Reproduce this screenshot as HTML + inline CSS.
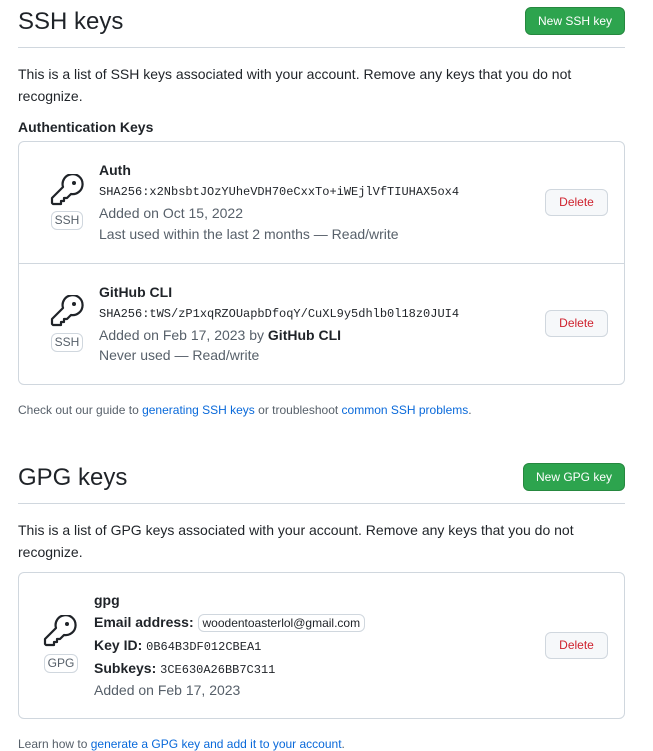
<!DOCTYPE html><html><head><style>
body{margin:0;width:653px;height:747px;overflow:hidden;background:#fff;font-family:"Liberation Sans",sans-serif;color:#1f2328;position:relative}
.a{position:absolute;white-space:nowrap}
h2{position:absolute;margin:0;font-weight:400;font-size:24px;left:18px}
.hr{position:absolute;left:18px;width:607px;height:1px;background:#d0d7de}
.btn{position:absolute;background:#2da44e;color:#fff;border:1px solid #26883f;border-radius:6px;font-size:12px;text-align:center;box-sizing:border-box;line-height:26px}
.p{font-size:14px;line-height:22px;left:18px}
.box{position:absolute;left:18px;width:607px;border:1px solid #d0d7de;border-radius:6px;box-sizing:border-box}
.t{font-size:14px;font-weight:bold}
.m{font-family:"Liberation Mono",monospace;font-size:12px}
.g{font-size:14px;color:#57606a}
.badge{position:absolute;border:1px solid #d0d7de;border-radius:6px;font-size:12px;color:#57606a;text-align:center;line-height:17px;height:19px;box-sizing:border-box}
.del{position:absolute;width:63px;height:27px;border:1px solid #d0d7de;border-radius:6px;background:#f6f8fa;color:#cf222e;font-size:12px;text-align:center;line-height:25px;box-sizing:border-box}
.f{font-size:12px;color:#57606a;left:18px}
.f a{color:#0969da;text-decoration:none}
svg{position:absolute}
</style></head><body>
<h2 style="top:8px">SSH keys</h2>
<div class="btn" style="left:525px;top:7px;width:100px;height:28px">New SSH key</div>
<div class="hr" style="top:47px"></div>
<div class="a p" style="top:63px">This is a list of SSH keys associated with your account. Remove any keys that you do not<br>recognize.</div>
<div class="a t" style="left:18px;top:119px">Authentication Keys</div>
<div class="box" style="top:141px;height:244px"></div>
<div class="hr" style="top:263px;left:19px;width:605px"></div>

<svg style="left:49px;top:174px" width="36" height="32" viewBox="0 0 36 32" fill="none" stroke="#1f2328" stroke-width="2.2" stroke-linejoin="round"><path d="M14 13 A10 10 0 1 1 22 20 L18 24 L15 24 L15 27 L12 27 L12 30 L4 30 L3 29 L3 24 Z"/><circle cx="25" cy="9" r="2" fill="#1f2328" stroke="none"/></svg>
<div class="badge" style="left:51px;top:211px;width:32px">SSH</div>
<div class="a t" style="left:99px;top:162px">Auth</div>
<div class="a m" style="left:99px;top:185px">SHA256:x2NbsbtJOzYUheVDH70eCxxTo+iWEjlVfTIUHAX5ox4</div>
<div class="a g" style="left:99px;top:205px">Added on Oct 15, 2022</div>
<div class="a g" style="left:99px;top:226px">Last used within the last 2 months — Read/write</div>
<div class="del" style="left:545px;top:189px">Delete</div>

<svg style="left:49px;top:295px" width="36" height="32" viewBox="0 0 36 32" fill="none" stroke="#1f2328" stroke-width="2.2" stroke-linejoin="round"><path d="M14 13 A10 10 0 1 1 22 20 L18 24 L15 24 L15 27 L12 27 L12 30 L4 30 L3 29 L3 24 Z"/><circle cx="25" cy="9" r="2" fill="#1f2328" stroke="none"/></svg>
<div class="badge" style="left:51px;top:333px;width:32px">SSH</div>
<div class="a t" style="left:99px;top:284px">GitHub CLI</div>
<div class="a m" style="left:99px;top:307px">SHA256:tWS/zP1xqRZOUapbDfoqY/CuXL9y5dhlb0l18z0JUI4</div>
<div class="a g" style="left:99px;top:327px">Added on Feb 17, 2023 by <b style="color:#1f2328">GitHub CLI</b></div>
<div class="a g" style="left:99px;top:347px">Never used — Read/write</div>
<div class="del" style="left:545px;top:310px">Delete</div>

<div class="a f" style="top:403px">Check out our guide to <a>generating SSH keys</a> or troubleshoot <a>common SSH problems</a>.</div>

<h2 style="top:464px">GPG keys</h2>
<div class="btn" style="left:523px;top:463px;width:102px;height:28px">New GPG key</div>
<div class="hr" style="top:503px"></div>
<div class="a p" style="top:519px">This is a list of GPG keys associated with your account. Remove any keys that you do not<br>recognize.</div>
<div class="box" style="top:572px;height:147px"></div>
<svg style="left:42px;top:615px" width="36" height="32" viewBox="0 0 36 32" fill="none" stroke="#1f2328" stroke-width="2.2" stroke-linejoin="round"><path d="M14 13 A10 10 0 1 1 22 20 L18 24 L15 24 L15 27 L12 27 L12 30 L4 30 L3 29 L3 24 Z"/><circle cx="25" cy="9" r="2" fill="#1f2328" stroke="none"/></svg>
<div class="badge" style="left:44px;top:654px;width:34px">GPG</div>
<div class="a t" style="left:94px;top:592px">gpg</div>
<div class="a t" style="left:94px;top:614px">Email address: <span style="font-weight:400;font-size:12px;border:1px solid #d0d7de;border-radius:6px;padding:1px 4px">woodentoasterlol@gmail.com</span></div>
<div class="a t" style="left:94px;top:637px">Key ID: <span class="m" style="font-weight:400">0B64B3DF012CBEA1</span></div>
<div class="a t" style="left:94px;top:660px">Subkeys: <span class="m" style="font-weight:400">3CE630A26BB7C311</span></div>
<div class="a g" style="left:94px;top:682px">Added on Feb 17, 2023</div>
<div class="del" style="left:545px;top:632px">Delete</div>
<div class="a f" style="top:737px">Learn how to <a>generate a GPG key and add it to your account</a>.</div>
</body></html>
